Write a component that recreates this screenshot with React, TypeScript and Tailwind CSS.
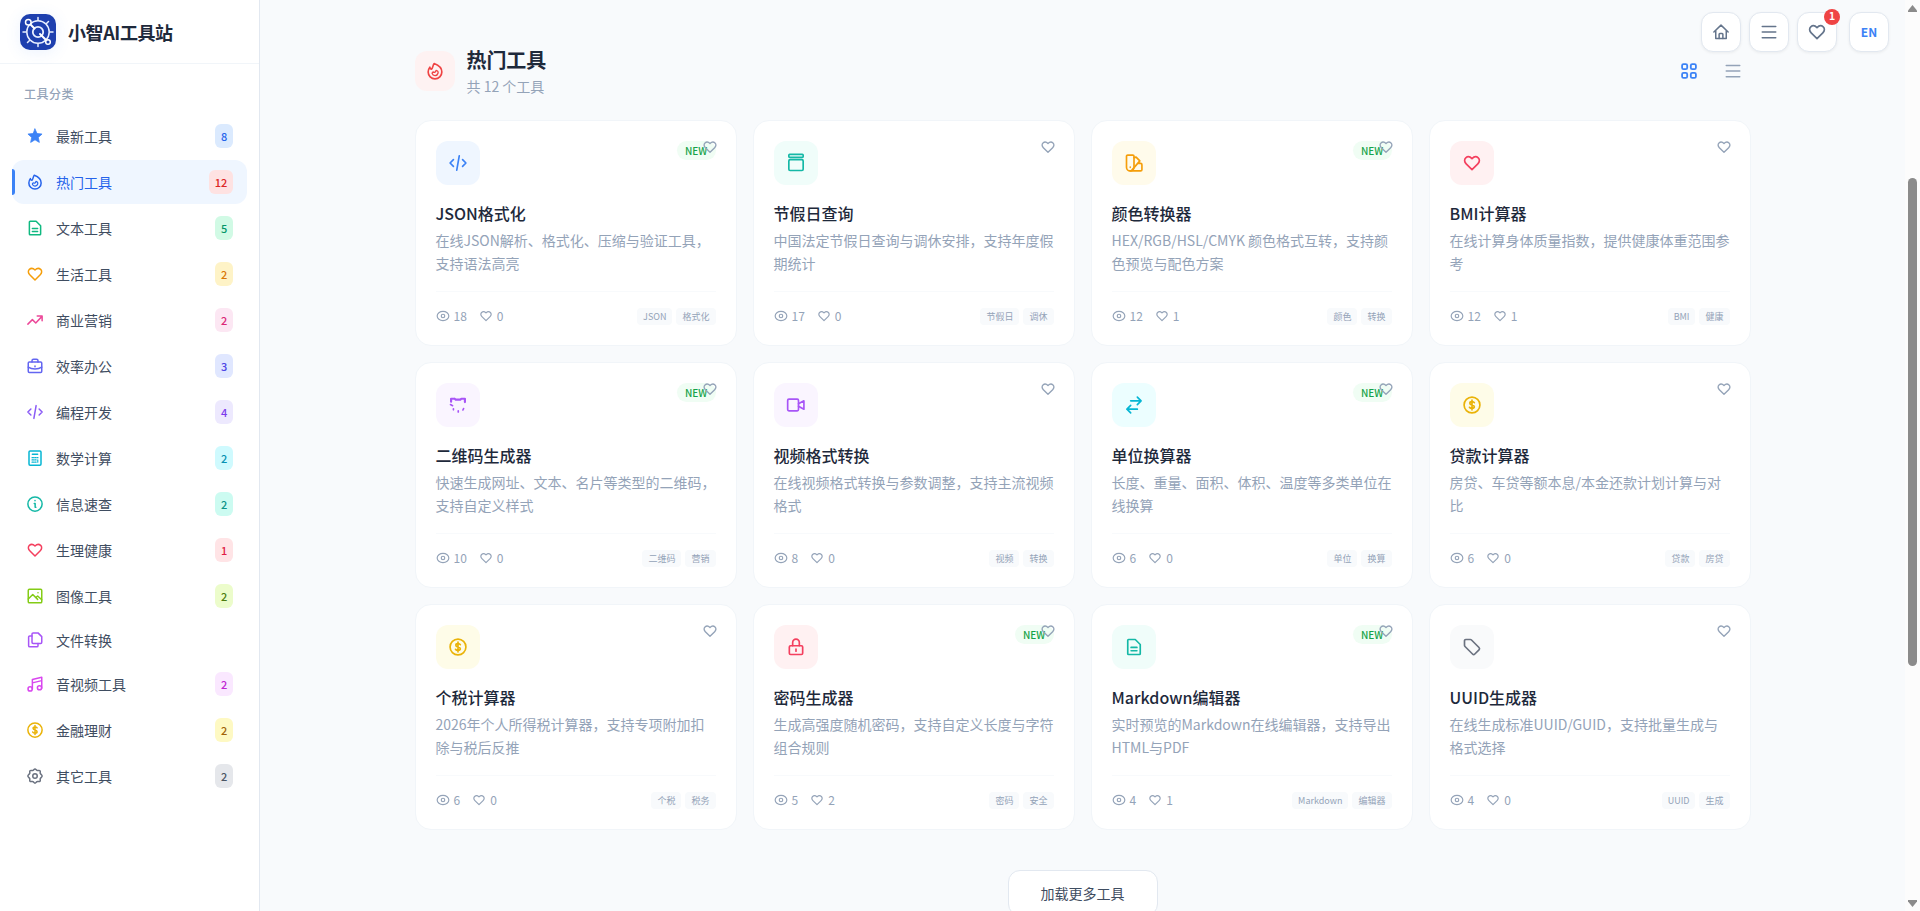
import React, { useState } from 'react';
import clsx from 'clsx';

const paths: Record<string, React.ReactNode> = {
  heart: <path d="M12 20 5 13C2.6 10.6 2.6 7.6 4.5 5.9 6.5 4.100 9.600 4.300 12 6.700c2.400-2.400 5.500-2.600 7.500-.8 1.900 1.700 1.900 4.700-.5 7.100Z" />,
  star: (
    <path
      d="m12 2.600 2.700 6.100 6.700.7-5 4.500 1.400 6.600L12 17.100l-5.800 3.400 1.400-6.600-5-4.500 6.700-.7Z"
      fill="currentColor"
      strokeWidth="1"
    />
  ),
  fire: (
    <>
      <path d="M11 3c5.500 2 9.200 6 9.200 10.300a8.200 8.200 0 0 1-16.400 0c0-2.300.8-4.300 2-5.800.3 1.500 1 2.300 2 2.300C9.700 8.300 9.200 5 11 3Z" />
      <path d="M13.300 11.200c1.900.4 2.900 1.900 2.300 3.500a3.700 3.700 0 0 1-7.100.2c.1-.9.700-1.600 1.700-1.700 1 .9 2.800.1 3.100-2Z" strokeWidth="1.600" />
    </>
  ),
  file: (
    <>
      <path d="M4.500 4a1 1 0 0 1 1-1h8l6 6v11a1 1 0 0 1-1 1h-13a1 1 0 0 1-1-1Z" />
      <path d="M8.500 12.500h7M8.500 16.500h7" />
    </>
  ),
  rise: <path d="m2.500 17.500 6-6 4.500 4.500 8-8.500M15 6.500h6.500V13" />,
  briefcase: (
    <>
      <rect x="3" y="6.500" width="18" height="14" rx="1.500" />
      <path d="M8 6.500V5a2 2 0 0 1 2-2h4a2 2 0 0 1 2 2v1.500M3 13.500c5 3.300 13 3.300 18 0M12 12v1" />
    </>
  ),
  code: <path d="m6.500 8-4 4 4 4M17.500 8l4 4-4 4M13.500 3.500l-3 17" />,
  calculator: (
    <>
      <rect x="4" y="2.500" width="16" height="19" rx="1.500" />
      <path d="M8.500 7h7" />
      <path d="M8 11.500h2M11.500 11.500h2M15 11.500h1M8 14.500h2M11.500 14.500h2M8 17.500h2M11.500 17.500h2M15.700 14.500v3" strokeWidth="1.500" />
    </>
  ),
  info: (
    <>
      <circle cx="12" cy="12" r="9.500" />
      <path d="M12 7.300v.2M11 11.200h1.200v5.200h1" />
    </>
  ),
  image: (
    <>
      <rect x="3" y="3" width="18" height="18" rx="1.500" />
      <path d="m3 16 6-6 6.500 6.500M13 14l2.500-2 5.500 5M16 7.500v.2" />
    </>
  ),
  files: (
    <>
      <path d="M8 4a1.500 1.500 0 0 1 1.500-1.500h6.500l5 5V15a1.500 1.500 0 0 1-1.500 1.500h-10A1.500 1.500 0 0 1 8 15Z" />
      <path d="M8 6.500H5A1.500 1.500 0 0 0 3.500 8v11.500A1.500 1.500 0 0 0 5 21h9.500a1.500 1.500 0 0 0 1.500-1.500v-3" />
    </>
  ),
  music: (
    <>
      <path d="M8.500 18.500V6L21 3v14.500M8.500 10.500 21 7.500" />
      <circle cx="5.500" cy="18.500" r="2.800" />
      <circle cx="18" cy="17" r="2.800" />
    </>
  ),
  coin: (
    <>
      <circle cx="12" cy="12" r="9.500" />
      <path
        d="M14.800 9.200c-.5-.9-1.500-1.300-2.800-1.300s-2.600.6-2.600 1.900c0 1.500 1.300 1.900 2.700 2.200 1.400.3 2.700.8 2.700 2.200 0 1.300-1.200 1.900-2.800 1.900-1.500 0-2.500-.5-3-1.400M12 6v12"
        strokeWidth="2"
      />
    </>
  ),
  gear: (
    <>
      <path d="M12 2.500c1.300 0 1.900 1.900 3.100 2.100 1.200.5 2.700-.6 3.600.4.900.9-.1 2.300.3 3.500.5 1.200 2.500 1.800 2.500 3.500s-2 2.300-2.500 3.500c-.4 1.200.6 2.600-.3 3.500-.9 1-2.400-.1-3.600.4-1.200.2-1.800 2.100-3.100 2.100s-1.900-1.900-3.100-2.100c-1.200-.5-2.700.6-3.600-.4-.9-.9.1-2.300-.3-3.500-.5-1.200-2.500-1.800-2.500-3.500S4.500 9.700 5 8.500c.4-1.200-.6-2.600.3-3.500.9-1 2.400.1 3.600-.4C10.100 4.400 10.700 2.500 12 2.500Z" />
      <circle cx="12" cy="12" r="3" />
    </>
  ),
  box: (
    <>
      <rect x="3.400" y="1.600" width="17.200" height="3.600" rx="1" />
      <rect x="3.400" y="8" width="17.200" height="13" rx="1.500" />
    </>
  ),
  palette: (
    <>
      <path d="M3 4a1.500 1.500 0 0 1 1.500-1.500h6A1.500 1.500 0 0 1 12 4v13a4.500 4.500 0 0 1-9 0Z" />
      <path d="m12 5.500 2.500-.6 4.500 4.600L9.500 20.500M17 12.500h3a1.500 1.500 0 0 1 1.500 1.500v6a1.500 1.500 0 0 1-1.500 1.500H7.500M7.500 17v.2" />
    </>
  ),
  qrcode: (
    <>
      <path d="M3.700 8V4.500h4.300M8 4.500l1.200 1h5.600l1.200-1h4.300V8.500" strokeWidth="2.600" />
      <path d="M3 11.500l2.500 1.300M6.500 16.500v1.300M12.300 19v1.300M18.700 16.300l-.8 1.700" />
    </>
  ),
  video: (
    <>
      <rect x="2" y="5" width="13" height="14" rx="1.500" />
      <path d="m15 10.500 6.500-3.500v10L15 13.500" />
    </>
  ),
  transfer: <path d="M8 7h12.500M16 2.500 20.500 7 16 11.500M16 17H3.500M8 12.500 3.500 17 8 21.500" />,
  lock: (
    <>
      <rect x="4" y="10.500" width="16" height="10.500" rx="1.500" />
      <path d="M8 10.500V6.500a4 4 0 0 1 8 0v4M12 14.500v2.500" />
    </>
  ),
  tag: <path d="M3 4.500A1.500 1.500 0 0 1 4.500 3H10a2 2 0 0 1 1.400.6l9 9a2 2 0 0 1 0 2.800l-5 5a2 2 0 0 1-2.800 0l-9-9A2 2 0 0 1 3 10Z" />,
  eye: (
    <>
      <ellipse cx="12" cy="12" rx="10" ry="8" />
      <circle cx="12" cy="12" r="3" />
    </>
  ),
  home: (
    <>
      <path d="M2.500 12 12 2.800l9.500 9.200M5 10v10.500h14V10" />
      <path d="M9.500 20.500V15a1 1 0 0 1 1-1h3a1 1 0 0 1 1 1v5.500" />
    </>
  ),
  menu: <path d="M3 4.500h18M3 12h18M3 19.500h18" />,
  grid: (
    <>
      <rect x="2.800" y="2.800" width="6.800" height="6.800" rx="2" strokeWidth="2.400" />
      <rect x="14.400" y="2.800" width="6.800" height="6.800" rx="2" strokeWidth="2.400" />
      <rect x="2.800" y="14.400" width="6.800" height="6.800" rx="2" strokeWidth="2.400" />
      <rect x="14.400" y="14.400" width="6.800" height="6.800" rx="2" strokeWidth="2.400" />
    </>
  ),
};

function Icon({ name, className }: { name: string; className?: string }) {
  return (
    <svg
      viewBox="0 0 24 24"
      fill="none"
      stroke="currentColor"
      strokeWidth="2"
      strokeLinecap="round"
      strokeLinejoin="round"
      className={clsx('shrink-0', className)}
    >
      {paths[name]}
    </svg>
  );
}

const categories = [
  { name: '最新工具', icon: 'star', count: 8, color: 'text-[#3b82f6]', badge: 'bg-[#dbeafe] text-[#2563eb]' },
  { name: '热门工具', icon: 'fire', count: 12, color: 'text-[#2563eb]', badge: 'bg-[#fee2e2] text-[#dc2626]' },
  { name: '文本工具', icon: 'file', count: 5, color: 'text-[#10b981]', badge: 'bg-[#d1fae5] text-[#059669]' },
  { name: '生活工具', icon: 'heart', count: 2, color: 'text-[#f59e0b]', badge: 'bg-[#fef3c7] text-[#d97706]' },
  { name: '商业营销', icon: 'rise', count: 2, color: 'text-[#ec4899]', badge: 'bg-[#fce7f3] text-[#db2777]' },
  { name: '效率办公', icon: 'briefcase', count: 3, color: 'text-[#6366f1]', badge: 'bg-[#e0e7ff] text-[#4f46e5]' },
  { name: '编程开发', icon: 'code', count: 4, color: 'text-[#8b5cf6]', badge: 'bg-[#ede9fe] text-[#7c3aed]' },
  { name: '数学计算', icon: 'calculator', count: 2, color: 'text-[#06b6d4]', badge: 'bg-[#cffafe] text-[#0891b2]' },
  { name: '信息速查', icon: 'info', count: 2, color: 'text-[#14b8a6]', badge: 'bg-[#ccfbf1] text-[#0d9488]' },
  { name: '生理健康', icon: 'heart', count: 1, color: 'text-[#f43f5e]', badge: 'bg-[#ffe4e6] text-[#e11d48]' },
  { name: '图像工具', icon: 'image', count: 2, color: 'text-[#84cc16]', badge: 'bg-[#ecfccb] text-[#4d7c0f]' },
  { name: '文件转换', icon: 'files', count: 0, color: 'text-[#a855f7]', badge: '' },
  { name: '音视频工具', icon: 'music', count: 2, color: 'text-[#d946ef]', badge: 'bg-[#fae8ff] text-[#c026d3]' },
  { name: '金融理财', icon: 'coin', count: 2, color: 'text-[#eab308]', badge: 'bg-[#fef9c3] text-[#a16207]' },
  { name: '其它工具', icon: 'gear', count: 2, color: 'text-[#6b7280]', badge: 'bg-[#e5e7eb] text-[#4b5563]' },
];

const tools = [
  { name: 'JSON格式化', desc: '在线JSON解析、格式化、压缩与验证工具，支持语法高亮', icon: 'code', color: 'bg-[#eff6ff] text-[#3b82f6]', isNew: true, views: 18, likes: 0, tags: ['JSON', '格式化'] },
  { name: '节假日查询', desc: '中国法定节假日查询与调休安排，支持年度假期统计', icon: 'box', color: 'bg-[#f0fdfa] text-[#14b8a6]', isNew: false, views: 17, likes: 0, tags: ['节假日', '调休'] },
  { name: '颜色转换器', desc: 'HEX/RGB/HSL/CMYK 颜色格式互转，支持颜色预览与配色方案', icon: 'palette', color: 'bg-[#fffbeb] text-[#f59e0b]', isNew: true, views: 12, likes: 1, tags: ['颜色', '转换'] },
  { name: 'BMI计算器', desc: '在线计算身体质量指数，提供健康体重范围参考', icon: 'heart', color: 'bg-[#fff1f2] text-[#f43f5e]', isNew: false, views: 12, likes: 1, tags: ['BMI', '健康'] },
  { name: '二维码生成器', desc: '快速生成网址、文本、名片等类型的二维码，支持自定义样式', icon: 'qrcode', color: 'bg-[#faf5ff] text-[#a855f7]', isNew: true, views: 10, likes: 0, tags: ['二维码', '营销'] },
  { name: '视频格式转换', desc: '在线视频格式转换与参数调整，支持主流视频格式', icon: 'video', color: 'bg-[#faf5ff] text-[#a855f7]', isNew: false, views: 8, likes: 0, tags: ['视频', '转换'] },
  { name: '单位换算器', desc: '长度、重量、面积、体积、温度等多类单位在线换算', icon: 'transfer', color: 'bg-[#ecfeff] text-[#06b6d4]', isNew: true, views: 6, likes: 0, tags: ['单位', '换算'] },
  { name: '贷款计算器', desc: '房贷、车贷等额本息/本金还款计划计算与对比', icon: 'coin', color: 'bg-[#fefce8] text-[#eab308]', isNew: false, views: 6, likes: 0, tags: ['贷款', '房贷'] },
  { name: '个税计算器', desc: '2026年个人所得税计算器，支持专项附加扣除与税后反推', icon: 'coin', color: 'bg-[#fefce8] text-[#eab308]', isNew: false, views: 6, likes: 0, tags: ['个税', '税务'] },
  { name: '密码生成器', desc: '生成高强度随机密码，支持自定义长度与字符组合规则', icon: 'lock', color: 'bg-[#fff1f2] text-[#f43f5e]', isNew: true, views: 5, likes: 2, tags: ['密码', '安全'] },
  { name: 'Markdown编辑器', desc: '实时预览的Markdown在线编辑器，支持导出HTML与PDF', icon: 'file', color: 'bg-[#f0fdfa] text-[#14b8a6]', isNew: true, views: 4, likes: 1, tags: ['Markdown', '编辑器'] },
  { name: 'UUID生成器', desc: '在线生成标准UUID/GUID，支持批量生成与格式选择', icon: 'tag', color: 'bg-[#f9fafb] text-[#6b7280]', isNew: false, views: 4, likes: 0, tags: ['UUID', '生成'] },
];

function Logo() {
  return (
    <div className="h-9 w-9 rounded-[10px] bg-[#1e40af] shadow-[0_2px_16px_rgba(59,130,246,0.1)]">
      <svg viewBox="0 0 36 36" fill="none" stroke="#e8efff" strokeWidth="1.500" strokeLinecap="round" className="h-9 w-9">
        <circle cx="18" cy="18" r="11.200" />
        <circle cx="18" cy="18" r="5.200" strokeWidth="1.800" />
        <path d="M18 3.500v2.500M18 30v2.500M3 18h3M30 18h3M28.500 7.500l-2 2M7.500 28.500l2-2" />
        <path d="m10 10 4.500 4.500M20 20l6 6" strokeWidth="2" stroke="#fff" />
        <circle cx="8.300" cy="8.300" r="2.800" fill="#1e40af" stroke="#fff" />
        <circle cx="28" cy="28" r="2.300" fill="#1e40af" stroke="#fff" />
      </svg>
    </div>
  );
}

function Sidebar({ active, onSelect }: { active: string; onSelect: (name: string) => void }) {
  return (
    <aside className="flex w-[260px] shrink-0 flex-col border-r border-[#e2e8f0] bg-white">
      <div className="flex h-16 shrink-0 items-center gap-3 border-b border-[#f1f5f9] px-5">
        <Logo />
        <h1 className="text-lg leading-7 font-bold tracking-[-0.4px] text-[#1e293b]">小智AI工具站</h1>
      </div>
      <nav className="flex flex-col gap-0.5 px-3 pt-5">
        <div className="mb-2 px-3 text-xs leading-5 font-medium tracking-[0.5px] text-[#94a3b8]">工具分类</div>
        {categories.map((c) => (
          <button
            key={c.name}
            onClick={() => onSelect(c.name)}
            className={clsx(
              'relative flex w-full items-center gap-3 rounded-xl px-3.5 py-2.5 text-left text-sm',
              active === c.name ? 'bg-[#eff6ff] text-[#2563eb]' : 'text-[#3f4d61]'
            )}
          >
            {active === c.name && (
              <span className="absolute top-[20%] left-0 h-[60%] w-[3px] rounded-r-sm bg-[#3b82f6]" />
            )}
            <Icon name={c.icon} className={clsx('h-[18px] w-[18px]', c.color)} />
            <span className="flex-1">{c.name}</span>
            {c.count > 0 && (
              <span className={clsx('h-6 rounded-md px-1.5 text-[11px] leading-6 font-medium tracking-[-0.2px]', c.badge)}>
                {c.count}
              </span>
            )}
          </button>
        ))}
      </nav>
    </aside>
  );
}

function ToolCard({ tool }: { tool: (typeof tools)[number] }) {
  return (
    <div className="relative rounded-2xl border border-[#f1f5f9] bg-white p-5">
      <div className="flex items-start justify-between">
        <div className={clsx('flex h-11 w-11 items-center justify-center rounded-xl', tool.color)}>
          <Icon name={tool.icon} className="h-5 w-5" />
        </div>
        {tool.isNew && (
          <span className="h-[19px] w-[39px] rounded-full bg-[#f0fdf4] pl-[8.5px] text-[10px] leading-[19px] font-medium text-[#16a34a]">
            NEW
          </span>
        )}
      </div>
      <button className="absolute top-[18px] right-[18px] text-[#94a3b8]">
        <Icon name="heart" className="h-4 w-4" />
      </button>
      <h3 className="mt-4 text-base leading-6 font-medium text-[#1e293b]">{tool.name}</h3>
      <p className="mt-1 h-[46px] text-sm leading-[22.75px] text-[#94a3b8]">{tool.desc}</p>
      <div className="mt-4 flex items-start justify-between border-t border-[#f8fafc] pt-4">
        <div className="flex gap-3 text-xs text-[#94a3b8]">
          <span className="flex items-center gap-1">
            <Icon name="eye" className="h-3.5 w-3.5" />
            {tool.views}
          </span>
          <span className="flex items-center gap-1">
            <Icon name="heart" className="h-3.5 w-3.5" />
            {tool.likes}
          </span>
        </div>
        <div className="flex gap-1">
          {tool.tags.map((tag) => (
            <span key={tag} className="h-[17px] rounded bg-[#f8fafc] px-1.5 text-[9px] leading-[17px] text-[#94a3b8]">
              {tag}
            </span>
          ))}
        </div>
      </div>
    </div>
  );
}

const topButton =
  'flex h-10 w-10 items-center justify-center rounded-xl border border-[#e2e8f0] bg-white text-[#64748b] shadow-[0_1px_3px_rgba(0,0,0,0.06)]';

export default function App() {
  const [active, setActive] = useState('热门工具');
  const [view, setView] = useState('grid');

  return (
    <div className="flex h-screen overflow-hidden bg-[#f8fafc] font-['Noto_Sans_CJK_SC',sans-serif]">
      <Sidebar active={active} onSelect={setActive} />

      <main className="relative flex-1 px-[154.5px]">
        {/* floating actions */}
        <div className="absolute top-3 right-4 flex gap-2">
          <button className={topButton}>
            <Icon name="home" className="h-[18px] w-[18px]" />
          </button>
          <button className={topButton}>
            <Icon name="menu" className="h-[18px] w-[18px]" />
          </button>
          <button className={clsx(topButton, 'relative')}>
            <Icon name="heart" className="h-5 w-5" />
            <span className="absolute -top-1 -right-1 h-4 w-4 rounded-full bg-[#ef4444] text-center font-['DejaVu_Sans_Mono',monospace] text-[10px] leading-4 font-bold text-white">
              1
            </span>
          </button>
          <button className="ml-1 flex h-10 w-10 items-center justify-center rounded-xl border border-[#e2e8f0] bg-white text-xs font-bold text-[#3b82f6] shadow-[0_1px_3px_rgba(0,0,0,0.06)]">
            EN
          </button>
        </div>

        <div className="flex items-start justify-between pt-[46px]">
          <div className="flex items-start gap-3">
            <div className="mt-[5px] flex h-10 w-10 items-center justify-center rounded-xl bg-[#fef2f2] text-[#ef4444]">
              <Icon name="fire" className="h-5 w-5" />
            </div>
            <div>
              <h2 className="text-xl leading-7 font-bold tracking-[-0.1px] text-[#1e293b]">热门工具</h2>
              <p className="text-sm leading-6 text-[#94a3b8]">共 12 个工具</p>
            </div>
          </div>
          <div className="mt-[7px] flex gap-2">
            {['grid', 'menu'].map((v) => (
              <button
                key={v}
                onClick={() => setView(v)}
                className={clsx('flex h-9 w-9 items-center justify-center', view === v ? 'text-[#3b82f6]' : 'text-[#94a3b8]')}
              >
                <Icon name={v} className="h-[18px] w-[18px]" />
              </button>
            ))}
          </div>
        </div>

        <div className="mt-[22px] grid grid-cols-4 gap-4">
          {tools.map((tool) => (
            <ToolCard key={tool.name} tool={tool} />
          ))}
        </div>

        <div className="mt-10 flex justify-center">
          <button className="h-[46px] rounded-xl border border-[#e2e8f0] bg-white px-8 text-sm text-[#3f4d61]">
            加载更多工具
          </button>
        </div>
      </main>

      {/* scrollbar */}
      <div className="flex w-[15px] shrink-0 flex-col items-center bg-[#fcfcfc] pt-[5px] pb-1">
        <svg viewBox="0 0 9 7" className="h-[7px] w-[9px]" fill="#8b8b8b">
          <path d="M4.500 0 9 5.500V7H0V5.500Z" />
        </svg>
        <div className="mt-[166px] h-[488px] w-[9px] rounded-full bg-[#8b8b8b]" />
        <svg viewBox="0 0 9 7" className="mt-auto h-[7px] w-[9px]" fill="#8b8b8b">
          <path d="M4.500 7 9 1.500V0H0v1.500Z" />
        </svg>
      </div>
    </div>
  );
}
